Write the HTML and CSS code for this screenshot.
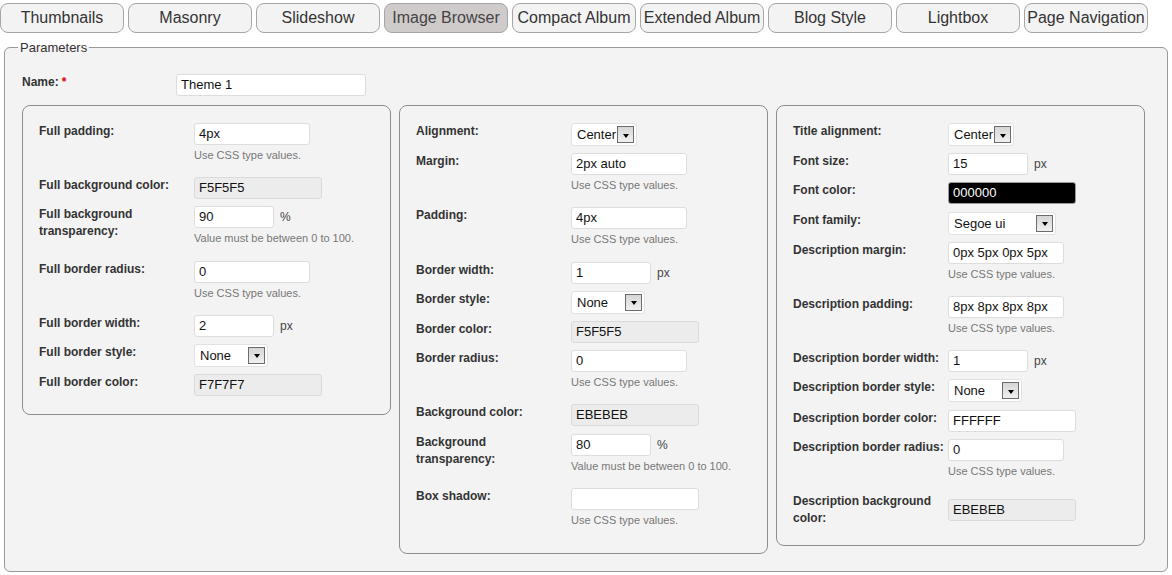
FILE: index.html
```html
<!DOCTYPE html>
<html>
<head>
<meta charset="utf-8">
<title>Theme parameters</title>
<link rel="stylesheet" href="styles.css">
</head>
<body>
<div class="tabs">
  <div class="tab">Thumbnails</div>
  <div class="tab">Masonry</div>
  <div class="tab">Slideshow</div>
  <div class="tab active">Image Browser</div>
  <div class="tab">Compact Album</div>
  <div class="tab">Extended Album</div>
  <div class="tab">Blog Style</div>
  <div class="tab">Lightbox</div>
  <div class="tab">Page Navigation</div>
</div>
<fieldset class="params">
  <legend>Parameters</legend>
  <div class="name-row">
    <div class="name-label">Name:<span class="req">*</span></div>
    <div class="f w190">Theme 1</div>
  </div>
  <div class="panels">
    <div class="panel">
      <div class="row"><div class="lbl">Full padding:</div><div class="val"><div class="ctl"><div class="f w116">4px</div></div><div class="hint">Use CSS type values.</div></div></div>
      <div class="row"><div class="lbl">Full background color:</div><div class="val"><div class="ctl"><div class="f w128 ro">F5F5F5</div></div></div></div>
      <div class="row"><div class="lbl">Full background<br>transparency:</div><div class="val"><div class="ctl"><div class="f w80">90</div><span class="unit">%</span></div><div class="hint">Value must be between 0 to 100.</div></div></div>
      <div class="row"><div class="lbl">Full border radius:</div><div class="val"><div class="ctl"><div class="f w116">0</div></div><div class="hint">Use CSS type values.</div></div></div>
      <div class="row"><div class="lbl">Full border width:</div><div class="val"><div class="ctl"><div class="f w80">2</div><span class="unit">px</span></div></div></div>
      <div class="row"><div class="lbl">Full border style:</div><div class="val"><div class="ctl"><div class="sel w74"><span>None</span><span class="btn"></span></div></div></div></div>
      <div class="row"><div class="lbl">Full border color:</div><div class="val"><div class="ctl"><div class="f w128 ro">F7F7F7</div></div></div></div>
    </div>
    <div class="panel">
      <div class="row"><div class="lbl">Alignment:</div><div class="val"><div class="ctl"><div class="sel w66"><span>Center</span><span class="btn"></span></div></div></div></div>
      <div class="row"><div class="lbl">Margin:</div><div class="val"><div class="ctl"><div class="f w116">2px auto</div></div><div class="hint">Use CSS type values.</div></div></div>
      <div class="row"><div class="lbl">Padding:</div><div class="val"><div class="ctl"><div class="f w116">4px</div></div><div class="hint">Use CSS type values.</div></div></div>
      <div class="row"><div class="lbl">Border width:</div><div class="val"><div class="ctl"><div class="f w80">1</div><span class="unit">px</span></div></div></div>
      <div class="row"><div class="lbl">Border style:</div><div class="val"><div class="ctl"><div class="sel w74"><span>None</span><span class="btn"></span></div></div></div></div>
      <div class="row"><div class="lbl">Border color:</div><div class="val"><div class="ctl"><div class="f w128 ro">F5F5F5</div></div></div></div>
      <div class="row"><div class="lbl">Border radius:</div><div class="val"><div class="ctl"><div class="f w116">0</div></div><div class="hint">Use CSS type values.</div></div></div>
      <div class="row"><div class="lbl">Background color:</div><div class="val"><div class="ctl"><div class="f w128 ro">EBEBEB</div></div></div></div>
      <div class="row"><div class="lbl">Background<br>transparency:</div><div class="val"><div class="ctl"><div class="f w80">80</div><span class="unit">%</span></div><div class="hint">Value must be between 0 to 100.</div></div></div>
      <div class="row"><div class="lbl">Box shadow:</div><div class="val"><div class="ctl"><div class="f w128"></div></div><div class="hint">Use CSS type values.</div></div></div>
    </div>
    <div class="panel">
      <div class="row"><div class="lbl">Title alignment:</div><div class="val"><div class="ctl"><div class="sel w66"><span>Center</span><span class="btn"></span></div></div></div></div>
      <div class="row"><div class="lbl">Font size:</div><div class="val"><div class="ctl"><div class="f w80">15</div><span class="unit">px</span></div></div></div>
      <div class="row"><div class="lbl">Font color:</div><div class="val"><div class="ctl"><div class="f w128 blk">000000</div></div></div></div>
      <div class="row"><div class="lbl">Font family:</div><div class="val"><div class="ctl"><div class="sel w108"><span>Segoe ui</span><span class="btn"></span></div></div></div></div>
      <div class="row"><div class="lbl">Description margin:</div><div class="val"><div class="ctl"><div class="f w116">0px 5px 0px 5px</div></div><div class="hint">Use CSS type values.</div></div></div>
      <div class="row"><div class="lbl">Description padding:</div><div class="val"><div class="ctl"><div class="f w116">8px 8px 8px 8px</div></div><div class="hint">Use CSS type values.</div></div></div>
      <div class="row"><div class="lbl">Description border width:</div><div class="val"><div class="ctl"><div class="f w80">1</div><span class="unit">px</span></div></div></div>
      <div class="row"><div class="lbl">Description border style:</div><div class="val"><div class="ctl"><div class="sel w74"><span>None</span><span class="btn"></span></div></div></div></div>
      <div class="row"><div class="lbl">Description border color:</div><div class="val"><div class="ctl"><div class="f w128">FFFFFF</div></div></div></div>
      <div class="row"><div class="lbl">Description border radius:</div><div class="val"><div class="ctl"><div class="f w116">0</div></div><div class="hint">Use CSS type values.</div></div></div>
      <div class="row"><div class="lbl">Description background<br>color:</div><div class="val"><div class="ctl"><div class="f w128 ro">EBEBEB</div></div></div></div>
    </div>
  </div>
</fieldset>
</body>
</html>
```
FILE: styles.css
```css
body {
  margin: 0;
  background: #ffffff;
  font-family: "Liberation Sans", Arial, sans-serif;
  color: #333333;
}

.tabs {
  display: flex;
  gap: 4px;
  padding: 3px 0 0 0;
}

.tab {
  width: 124px;
  height: 30px;
  box-sizing: border-box;
  flex: none;
  border: 1px solid #a6a6a6;
  border-radius: 8px;
  background: #f3f3f3;
  font-size: 16px;
  line-height: 28px;
  text-align: center;
  white-space: nowrap;
  color: #333333;
}

.tab.active {
  background: #cfcbcb;
  color: #444444;
}

.params {
  margin: 7px 4px 0;
  padding: 0 21px 17px 17px;
  border: 1px solid #999999;
  border-radius: 6px;
  background: #f3f3f3;
  min-width: 0;
}

.params legend {
  margin-left: -4px;
  padding: 0 2px;
  font-size: 13px;
  line-height: 15px;
  color: #333333;
}

.name-row {
  display: flex;
  align-items: flex-start;
  margin-top: 19px;
}

.name-label {
  width: 154px;
  flex: none;
  font-size: 12px;
  font-weight: bold;
  line-height: 17px;
  color: #333333;
}

.req {
  color: #e00000;
  margin-left: 3px;
}

.panels {
  display: flex;
  align-items: flex-start;
  gap: 8px;
  margin-top: 9px;
}

.panel {
  width: 369px;
  flex: none;
  box-sizing: border-box;
  border: 1px solid #8e8e8e;
  border-radius: 8px;
  padding: 17px 10px 11px 16px;
}

.row {
  display: grid;
  grid-template-columns: 155px 1fr;
  align-items: start;
  margin-bottom: 7.2px;
}

.lbl {
  font-size: 12px;
  font-weight: bold;
  line-height: 17px;
  color: #333333;
}

.val {
  align-self: center;
}

.ctl {
  display: flex;
  align-items: center;
}

.f {
  height: 22px;
  box-sizing: border-box;
  flex: none;
  border: 1px solid #dddddd;
  border-radius: 3px;
  background: #ffffff;
  padding: 0 4px;
  font-size: 13px;
  line-height: 20px;
  color: #111111;
  white-space: nowrap;
  overflow: hidden;
}

.f.ro {
  background: #ececec;
  border-color: #dadada;
}

.f.blk {
  background: #000000;
  color: #ffffff;
  border-color: #9a9a9a;
}

.w80 { width: 80px; }
.w116 { width: 116px; }
.w128 { width: 128px; }
.w190 { width: 190px; }
.w66 { width: 66px; }
.w74 { width: 74px; }
.w108 { width: 108px; }

.unit {
  margin-left: 6px;
  font-size: 12px;
  color: #444444;
}

.sel {
  height: 23px;
  box-sizing: border-box;
  flex: none;
  display: flex;
  align-items: center;
  justify-content: space-between;
  border: 1px solid #e2e2e2;
  border-radius: 3px;
  background: #ffffff;
  padding: 0 2px 0 5px;
  font-size: 13px;
  color: #111111;
}

.btn {
  width: 17px;
  height: 17px;
  box-sizing: border-box;
  display: flex;
  align-items: center;
  justify-content: center;
  border: 1px solid #6c6c6c;
  background: linear-gradient(#d6d6d6, #f0f0f0);
}

.btn::after {
  content: "";
  width: 0;
  height: 0;
  margin-top: 2px;
  border-left: 3.5px solid transparent;
  border-right: 3.5px solid transparent;
  border-top: 4px solid #000000;
}

.hint {
  margin-top: 3px;
  padding-bottom: 7px;
  font-size: 11px;
  line-height: 15px;
  color: #777777;
  white-space: nowrap;
}
```
